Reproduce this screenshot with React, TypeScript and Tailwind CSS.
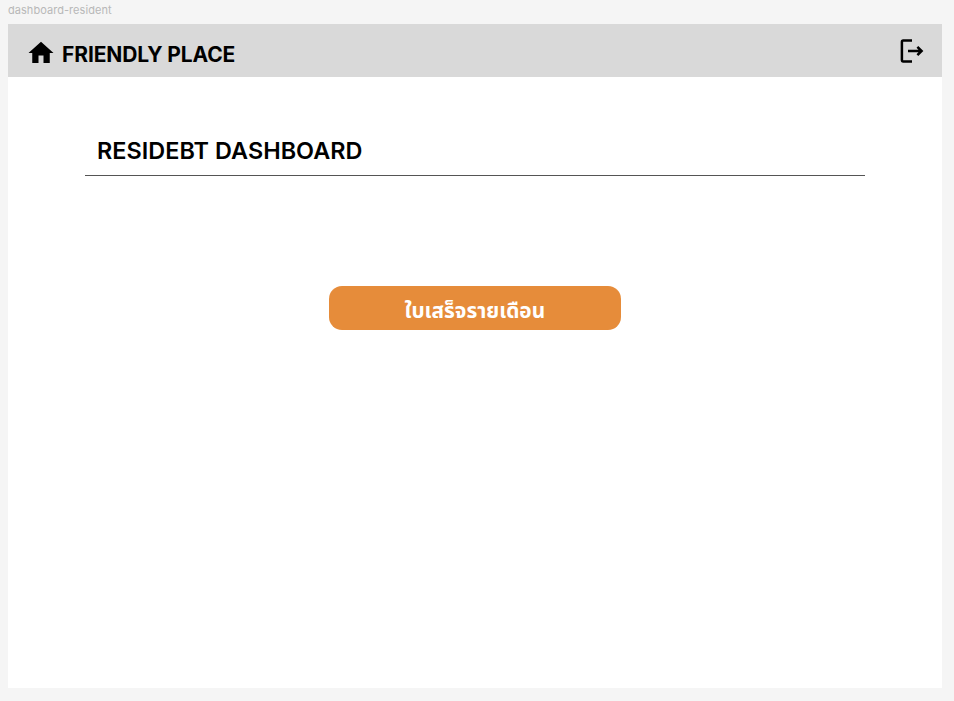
import React from 'react';
import { MdHome } from 'react-icons/md';

function LogoutIcon() {
  return (
    <svg viewBox="0 0 28 28" className="size-[28px]" fill="none" stroke="currentColor" strokeWidth="2.5">
      <path d="M14 3.6H5.2Q3.9 3.6 3.9 4.9V23.1Q3.9 24.4 5.2 24.4H14" />
      <path d="M10 14H23.5M19.4 9.8L23.6 14L19.4 18.2" />
    </svg>
  );
}

export default function App() {
  return (
    <div className="h-[701px] w-[954px] overflow-hidden bg-[#f5f5f5] pl-2 font-['Inter',sans-serif] text-black">
      <div className="h-[24.4px] pt-[2px] text-[11px] leading-[17px] tracking-[0.05px] text-[#b8b8b8]">dashboard-resident</div>
      <main className="h-[663.6px] w-[933.6px] bg-white">
        <header className="flex h-[53px] items-center justify-between bg-[#d9d9d9] pr-[16px] pl-[18px]">
          <div className="flex items-center">
            <MdHome className="mt-[4px] size-[30px]" />
            <span className="ml-[6px] pt-[8px] text-[21px] leading-[26px] font-bold tracking-[-0.12px]">FRIENDLY PLACE</span>
          </div>
          <LogoutIcon />
        </header>
        <section className="ml-[77px] w-[779.6px] border-b border-[#555555] pt-[59px] pb-[9.6px] pl-[12px]">
          <h1 className="text-[23.4px] leading-[29px] font-semibold tracking-[0.05px]">RESIDEBT DASHBOARD</h1>
        </section>
        <div className="flex justify-center pt-[110.4px]">
          <button className="h-[44px] w-[292px] rounded-[13px] bg-[#e68c3a] pt-[4px] font-['Noto_Sans','Noto_Sans_Thai',sans-serif] text-[20.8px] font-bold text-white">ใบเสร็จรายเดือน</button>
        </div>
      </main>
    </div>
  );
}
